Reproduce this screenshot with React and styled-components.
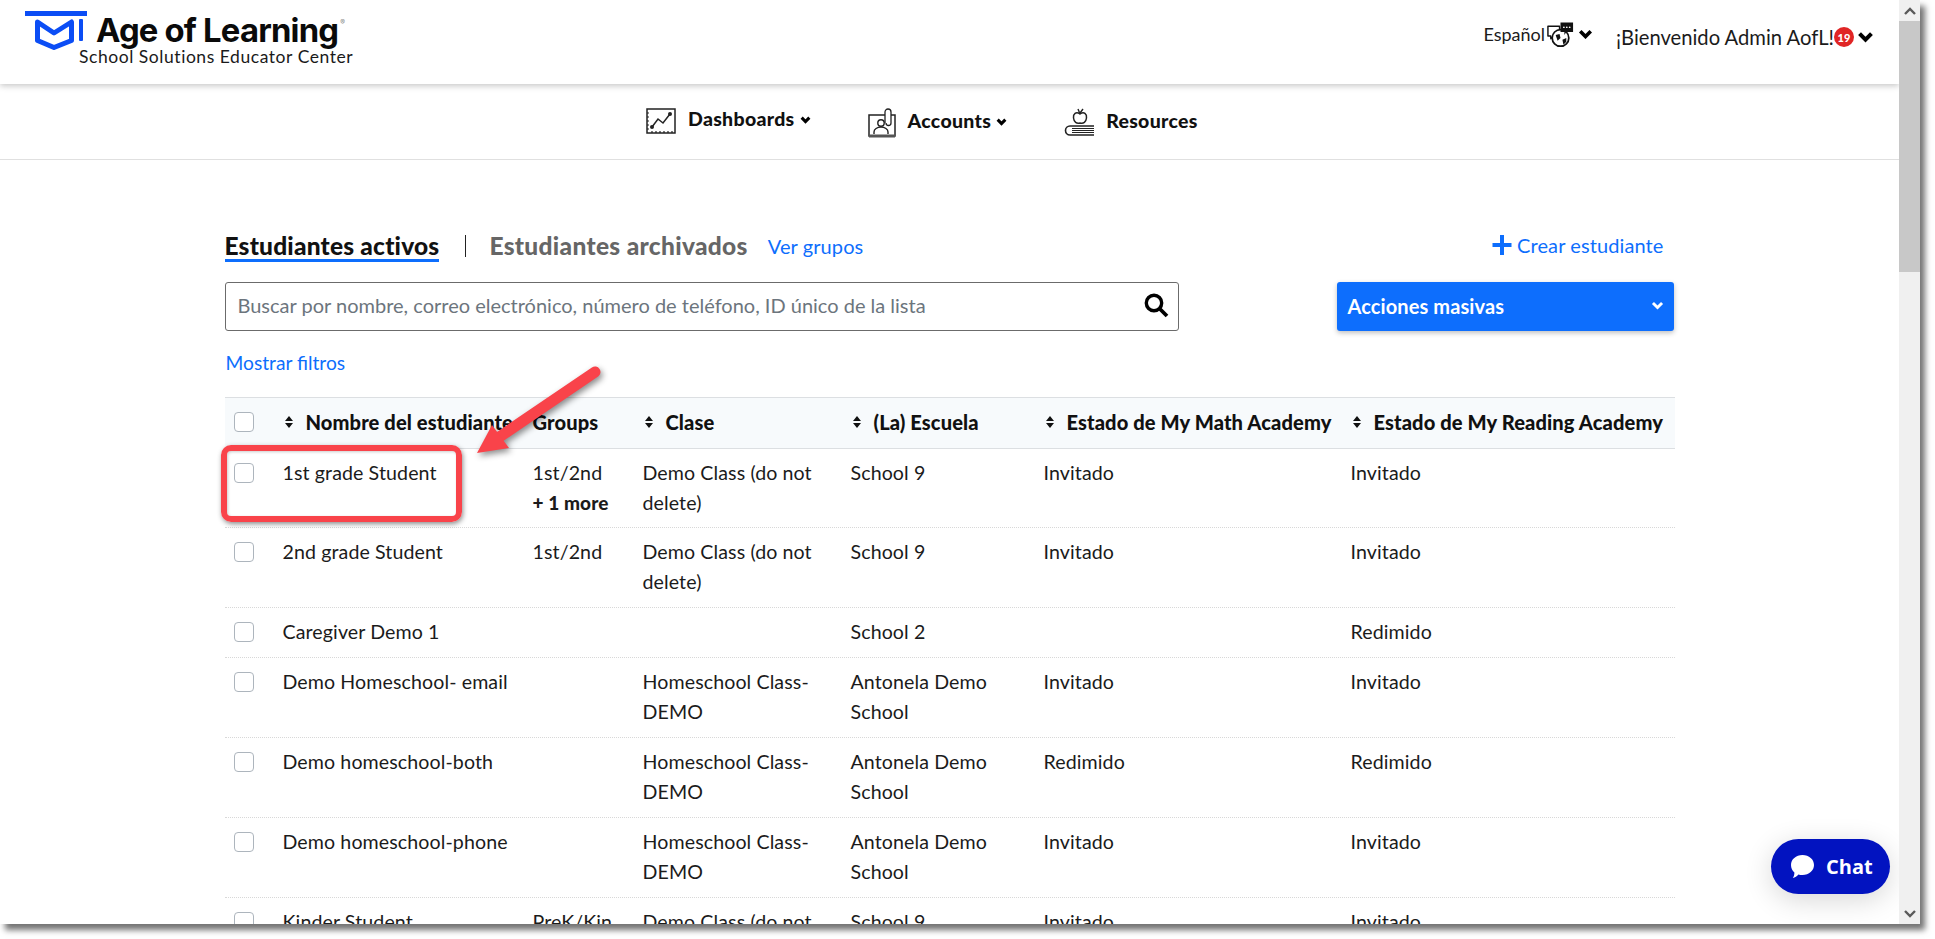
import styled, { createGlobalStyle } from 'styled-components';

const GlobalStyle = createGlobalStyle`
  html, body {
    margin: 0;
    padding: 0;
    background: #fff;
    overflow: hidden;
  }
  * {
    box-sizing: border-box;
  }
`;

const FONT = `Lato, "Open Sans", sans-serif`;
const BLUE = '#0d6efd';
const COLUMNS = '58px 250px 110px 208px 193px 307px 321px';

const Screen = styled.div`
  position: relative;
  width: 1920px;
  height: 924px;
  display: flex;
  overflow: hidden;
  font-family: ${FONT};
  color: #1b1b1b;
  box-shadow: 5px 6px 6px rgba(0, 0, 0, 0.55);
`;

const Frame = styled.div`
  width: 1935px;
  height: 939px;
`;

const Page = styled.div`
  position: relative;
  width: 1899px;
  height: 924px;
  background: #fff;
  overflow: hidden;
`;

const ScrollBar = styled.div`
  width: 21px;
  height: 924px;
  background: #f0f0f0;
  display: flex;
  flex-direction: column;
`;

const ScrollButton = styled.div`
  height: 21px;
  display: flex;
  align-items: center;
  justify-content: center;
`;

const ScrollThumb = styled.div`
  height: 251px;
  background: #c8c8c8;
`;

const ScrollTrack = styled.div`
  flex-grow: 1;
`;

const Header = styled.header`
  height: 84px;
  padding: 11px 25px 0 25px;
  display: flex;
  justify-content: space-between;
  align-items: flex-start;
  box-shadow: 0 2px 6px rgba(0, 0, 0, 0.22);
  background: #fff;
  position: relative;
`;

const Brand = styled.div`
  display: flex;
  flex-direction: column;
`;

const BrandTop = styled.div`
  display: flex;
  align-items: flex-start;
  height: 37px;
`;

const BrandName = styled.div`
  margin: 2px 0 0 9px;
  font-family: Inter, sans-serif;
  font-weight: 700;
  font-size: 32.8px;
  letter-spacing: -0.8px;
  line-height: 34px;
  color: #0a0a0a;
  position: relative;
`;

const Registered = styled.sup`
  font-size: 7px;
  color: #888;
  font-weight: 400;
  letter-spacing: 0;
  vertical-align: 17px;
  line-height: 0;
  margin-left: 2px;
`;

const BrandSub = styled.div`
  margin-left: 54px;
  font-family: Lato, sans-serif;
  font-size: 17.5px;
  line-height: 18px;
  letter-spacing: 0.55px;
  color: #1a1a1a;
`;

const UserArea = styled.div`
  display: flex;
  align-items: flex-start;
  padding-top: 10px;
`;

const Language = styled.div`
  display: flex;
  align-items: center;
  font-size: 18px;
  height: 26px;
  margin-right: 23px;
`;

const LanguageIcon = styled.svg`
  width: 29px;
  height: 27px;
  margin: 0 3px 0 1px;
`;

const Welcome = styled.div`
  display: flex;
  align-items: center;
  font-size: 20.2px;
  height: 32px;
`;

const Badge = styled.span`
  width: 20px;
  height: 20px;
  border-radius: 50%;
  background: #e02525;
  color: #fff;
  font-size: 11px;
  font-weight: 900;
  display: flex;
  align-items: center;
  justify-content: center;
  margin: 0 3px 0 0;
`;

const Nav = styled.nav`
  height: 76px;
  padding: 24px 0 0 646px;
  display: flex;
  align-items: flex-start;
  gap: 57px;
  border-bottom: 1px solid #e0e0e0;
`;

const NavItem = styled.div`
  display: flex;
  align-items: flex-start;
  font-size: 19.5px;
  letter-spacing: 0.3px;
  font-weight: 900;
  color: #111;
  height: 32px;
`;

const NavLabel = styled.span`
  line-height: 22px;
  margin: ${(props) => (props.$raised ? '0' : '2px')} 5px 0 12px;
`;

const NavCaret = styled.span`
  margin-top: ${(props) => (props.$raised ? '8px' : '10px')};
  display: flex;
`;

const Main = styled.main`
  width: 1450px;
  margin: 0 auto;
  padding-top: 64px;
`;

const TabsRow = styled.div`
  display: flex;
  align-items: flex-start;
  height: 58px;
`;

const Tab = styled.div`
  font-size: 24.5px;
  letter-spacing: ${(props) => (props.$active ? '0.2px' : '0.32px')};
  font-weight: 900;
  line-height: 30px;
  height: 38px;
  padding: 7px 0 0;
  white-space: nowrap;
  color: ${(props) => (props.$active ? '#111' : '#666')};
  border-bottom: ${(props) => (props.$active ? `3px solid ${BLUE}` : 'none')};
`;

const TabDivider = styled.div`
  width: 1px;
  height: 22px;
  background: #222;
  margin: 11px 23px 0 26px;
`;

const TextLink = styled.a`
  color: ${BLUE};
  font-size: 20px;
  letter-spacing: 0.1px;
  line-height: 30px;
`;

const GroupsLink = styled(TextLink)`
  margin: 7px 0 0 20px;
`;

const CreateLink = styled(TextLink)`
  margin-left: auto;
  margin-right: 11px;
  margin-top: 6px;
  display: flex;
  align-items: center;
  gap: 5px;
`;

const SearchRow = styled.div`
  display: flex;
  justify-content: space-between;
  align-items: flex-start;
  height: 48px;
`;

const SearchBox = styled.div`
  width: 954px;
  height: 49px;
  border: 1px solid #6b6b6b;
  border-radius: 3px;
  padding: 0 9px 3px 12px;
  display: flex;
  align-items: center;
  justify-content: space-between;
  font-size: 20px;
  color: #6c757d;
`;

const BulkButton = styled.div`
  width: 337px;
  height: 49px;
  margin-right: 1px;
  background: ${BLUE};
  border-radius: 3px;
  padding: 0 10px 2px 11px;
  display: flex;
  align-items: center;
  justify-content: space-between;
  color: #fff;
  font-size: 20px;
  letter-spacing: 0.1px;
  font-weight: 700;
  box-shadow: 0 2px 5px rgba(0, 0, 0, 0.25);
`;

const FiltersRow = styled.div`
  height: 67px;
  padding-top: 18px;
`;

const FiltersLink = styled(TextLink)`
  font-size: 19.2px;
  letter-spacing: 0;
  margin-left: 1px;
`;

const Table = styled.div`
  font-size: 19.6px;
  letter-spacing: 0.1px;
`;

const HeadRow = styled.div`
  display: grid;
  grid-template-columns: ${COLUMNS};
  height: 52px;
  padding-bottom: 2px;
  align-items: center;
  background: #f7fafc;
  border-top: 1px solid #dcdfe2;
  border-bottom: 1px solid #dcdfe2;
  font-size: 20.1px;
  font-weight: 900;
  color: #111;
`;

const HeadCell = styled.div`
  display: flex;
  align-items: center;
  gap: 13px;
  white-space: nowrap;
  padding-left: ${(props) => (props.$sortable ? '2px' : '0')};
`;

const Row = styled.div`
  display: grid;
  grid-template-columns: ${COLUMNS};
  padding: 9px 0 ${(props) => (props.$first ? '9px' : '10px')};
  border-bottom: 1px dotted #d8d8d8;
`;

const CheckCell = styled.div`
  padding: ${(props) => (props.$head ? '0' : '5px')} 0 0 9px;
`;

const Check = styled.div`
  width: 20px;
  height: 20px;
  border: 1px solid #adb5bd;
  border-radius: 4px;
  background: #fff;
`;

const Cell = styled.div`
  line-height: 30px;
  padding-right: 14px;
  min-height: 30px;
`;

const More = styled.div`
  font-size: 19px;
  font-weight: 900;
  white-space: nowrap;
`;

const MarkBox = styled.div`
  position: absolute;
  left: 221px;
  top: 445px;
  width: 241px;
  height: 77px;
  border: 6px solid #f9434a;
  border-radius: 10px;
  box-shadow: 1px 2px 5px rgba(0, 0, 0, 0.45), inset 1px 1px 3px rgba(0, 0, 0, 0.2);
`;

const MarkArrow = styled.svg`
  position: absolute;
  left: 465px;
  top: 360px;
  width: 150px;
  height: 105px;
  overflow: visible;
  filter: drop-shadow(2px 3px 3px rgba(0, 0, 0, 0.45));
`;

const ChatButton = styled.div`
  position: absolute;
  left: 1771px;
  top: 839px;
  width: 119px;
  height: 55px;
  border-radius: 28px;
  background: #0213c0;
  color: #fff;
  font-family: "Open Sans", sans-serif;
  font-size: 20px;
  font-weight: 700;
  display: flex;
  align-items: center;
  gap: 12px;
  padding-left: 20px;
  box-shadow: 0 6px 28px rgba(0, 0, 0, 0.16);
`;

const Chevron = ({ size = 14, color = '#000', weight = 3.4 }) => (
  <svg width={size} height={size * 0.7} viewBox="0 0 14 10">
    <polyline points="2,2.2 7,7.2 12,2.2" fill="none" stroke={color} strokeWidth={weight} />
  </svg>
);

const SortIcon = () => (
  <svg width="8" height="12" viewBox="0 0 8 12">
    <path d="M4 0 L8 5 H0 Z M4 12 L8 7 H0 Z" fill="#111" />
  </svg>
);

const LogoMark = () => (
  <svg width="62" height="41" viewBox="0 0 62 41">
    <rect x="0" y="0" width="62" height="5" fill="#0b4df5" />
    <path d="M12.5 11 L29 22 L46.5 11 V29.5 L29 36.5 L12.5 29.5 Z" fill="none" stroke="#0b4df5" strokeWidth="5" strokeLinejoin="round" />
    <rect x="54" y="8" width="4" height="22" rx="1" fill="#0b4df5" />
  </svg>
);

const GlobeChat = () => (
  <LanguageIcon viewBox="0 0 30 27">
    <path d="M2 5 H14 V15 H8 L5 18 V15 H2 Z" fill="#fff" stroke="#111" strokeWidth="1.5" strokeLinejoin="round" />
    <circle cx="15" cy="17" r="8.6" fill="#fff" stroke="#111" strokeWidth="1.8" />
    <path d="M10 14 L14 13 L15 17 L12 20 Z M17 19 L21 17 L21 21 L18 24 Z" fill="#111" />
    <path d="M15 1 H28 V11 H21 L19 14 V11 H15 Z" fill="#111" />
    <circle cx="18.5" cy="6" r="0.9" fill="#fff" />
    <circle cx="21.5" cy="6" r="0.9" fill="#fff" />
    <circle cx="24.5" cy="6" r="0.9" fill="#fff" />
  </LanguageIcon>
);

const DashboardIcon = () => (
  <svg width="30" height="26" viewBox="0 0 30 26">
    <rect x="1" y="1" width="28" height="24" fill="none" stroke="#222" strokeWidth="1.5" />
    <path d="M1 5 H3 M1 9 H3 M1 13 H3 M1 17 H3 M1 21 H3 M6 25 V23 M10 25 V23 M14 25 V23 M18 25 V23 M22 25 V23 M26 25 V23" stroke="#222" strokeWidth="1.2" />
    <polyline points="6,19 12,11 17,15 24,6" fill="none" stroke="#222" strokeWidth="1.5" />
    <circle cx="6" cy="19" r="2" fill="#222" />
    <circle cx="24" cy="6" r="2" fill="#222" />
  </svg>
);

const AccountIcon = () => (
  <svg width="28" height="30" viewBox="0 0 28 30">
    <rect x="1" y="7" width="26" height="21" fill="none" stroke="#222" strokeWidth="1.5" />
    <rect x="1" y="26.5" width="26" height="3" fill="#555" />
    <path d="M17 15 V4 a3 3 0 0 1 6 0 V15 a2.5 2.5 0 0 1 -5 0" fill="#fff" stroke="#222" strokeWidth="1.3" />
    <circle cx="13" cy="15" r="3.2" fill="none" stroke="#222" strokeWidth="1.4" />
    <path d="M6 26 V24 a7 5 0 0 1 14 0 V26" fill="none" stroke="#222" strokeWidth="1.4" />
  </svg>
);

const ResourceIcon = () => (
  <svg width="30" height="28" viewBox="0 0 30 28">
    <path d="M16 6 C12 3 9 6 9.5 10 C10 14 12.5 16 16 15 C19.5 16 22 14 22.5 10 C23 6 20 3 16 6 Z" fill="none" stroke="#222" strokeWidth="1.5" />
    <path d="M16 6 L14 1 M16 5 L19 1" stroke="#222" strokeWidth="1.4" />
    <path d="M30 18 H6 a4.5 4.5 0 0 0 0 9 H30" fill="none" stroke="#222" strokeWidth="1.6" />
    <path d="M8 20.5 H30 M8 22.5 H30 M8 24.5 H30" stroke="#222" strokeWidth="1.1" />
  </svg>
);

const SearchIcon = () => (
  <svg width="25" height="25" viewBox="0 0 25 25">
    <circle cx="10" cy="10" r="7.7" fill="none" stroke="#000" strokeWidth="3.4" />
    <line x1="15.5" y1="15.5" x2="23" y2="23" stroke="#000" strokeWidth="3.8" />
  </svg>
);

const PlusIcon = () => (
  <svg width="20" height="20" viewBox="0 0 19 20">
    <path d="M7.5 0 H11.5 V8 H19 V12 H11.5 V20 H7.5 V12 H0 V8 H7.5 Z" fill={BLUE} />
  </svg>
);

const ChatBubble = () => (
  <svg width="23" height="24" viewBox="0 0 23 24">
    <path d="M11.5 0 C18 0 23 4.4 23 10 C23 15.6 18 20 11.5 20 C9.8 20 8.6 19.8 7.4 19.4 C6 21 4 22.5 1.8 23 C3 21.4 3.4 19.6 3.4 17.4 C1.3 15.6 0 13 0 10 C0 4.4 5 0 11.5 0 Z" fill="#fff" />
  </svg>
);

const HEADERS = [
  { label: 'Nombre del estudiante', sortable: true },
  { label: 'Groups' },
  { label: 'Clase', sortable: true },
  { label: '(La) Escuela', sortable: true },
  { label: 'Estado de My Math Academy', sortable: true },
  { label: 'Estado de My Reading Academy', sortable: true },
];

const DEMO_CLASS = 'Demo Class (do not delete)';
const HOME_CLASS = 'Homeschool Class-DEMO';
const ANTONELA = 'Antonela Demo School';

const STUDENTS = [
  { name: '1st grade Student', group: '1st/2nd', more: '+ 1 more', klass: DEMO_CLASS, school: 'School 9', math: 'Invitado', reading: 'Invitado' },
  { name: '2nd grade Student', group: '1st/2nd', klass: DEMO_CLASS, school: 'School 9', math: 'Invitado', reading: 'Invitado' },
  { name: 'Caregiver Demo 1', school: 'School 2', reading: 'Redimido' },
  { name: 'Demo Homeschool- email', klass: HOME_CLASS, school: ANTONELA, math: 'Invitado', reading: 'Invitado' },
  { name: 'Demo homeschool-both', klass: HOME_CLASS, school: ANTONELA, math: 'Redimido', reading: 'Redimido' },
  { name: 'Demo homeschool-phone', klass: HOME_CLASS, school: ANTONELA, math: 'Invitado', reading: 'Invitado' },
  { name: 'Kinder Student', group: 'PreK/Kin', klass: DEMO_CLASS, school: 'School 9', math: 'Invitado', reading: 'Invitado' },
];

function App() {
  return (
    <Frame>
      <GlobalStyle />
      <Screen>
        <Page>
          <Header>
            <Brand>
              <BrandTop>
                <LogoMark />
                <BrandName>
                  Age of Learning<Registered>®</Registered>
                </BrandName>
              </BrandTop>
              <BrandSub>School Solutions Educator Center</BrandSub>
            </Brand>
            <UserArea>
              <Language>
                Español
                <GlobeChat />
                <Chevron size={15} />
              </Language>
              <Welcome>
                ¡Bienvenido Admin AofL!
                <Badge>19</Badge>
                <Chevron size={17} />
              </Welcome>
            </UserArea>
          </Header>

          <Nav>
            <NavItem>
              <DashboardIcon />
              <NavLabel $raised>Dashboards</NavLabel>
              <NavCaret $raised>
                <Chevron size={11} weight={4} />
              </NavCaret>
            </NavItem>
            <NavItem>
              <AccountIcon />
              <NavLabel>Accounts</NavLabel>
              <NavCaret>
                <Chevron size={11} weight={4} />
              </NavCaret>
            </NavItem>
            <NavItem>
              <ResourceIcon />
              <NavLabel>Resources</NavLabel>
            </NavItem>
          </Nav>

          <Main>
            <TabsRow>
              <Tab $active>Estudiantes activos</Tab>
              <TabDivider />
              <Tab>Estudiantes archivados</Tab>
              <GroupsLink>Ver grupos</GroupsLink>
              <CreateLink>
                <PlusIcon />
                Crear estudiante
              </CreateLink>
            </TabsRow>

            <SearchRow>
              <SearchBox>
                Buscar por nombre, correo electrónico, número de teléfono, ID único de la lista
                <SearchIcon />
              </SearchBox>
              <BulkButton>
                Acciones masivas
                <Chevron size={13} color="#fff" weight={3.2} />
              </BulkButton>
            </SearchRow>

            <FiltersRow>
              <FiltersLink>Mostrar filtros</FiltersLink>
            </FiltersRow>

            <Table>
              <HeadRow>
                <CheckCell $head>
                  <Check />
                </CheckCell>
                {HEADERS.map((head) => (
                  <HeadCell key={head.label} $sortable={head.sortable}>
                    {head.sortable && <SortIcon />}
                    {head.label}
                  </HeadCell>
                ))}
              </HeadRow>
              {STUDENTS.map((student, index) => (
                <Row key={student.name} $first={index === 0}>
                  <CheckCell>
                    <Check />
                  </CheckCell>
                  <Cell>{student.name}</Cell>
                  <Cell>
                    {student.group}
                    {student.more && <More>{student.more}</More>}
                  </Cell>
                  <Cell>{student.klass}</Cell>
                  <Cell>{student.school}</Cell>
                  <Cell>{student.math}</Cell>
                  <Cell>{student.reading}</Cell>
                </Row>
              ))}
            </Table>
          </Main>

          <MarkBox />
          <MarkArrow viewBox="0 0 150 105">
            <path d="M130 12 L24 84" stroke="#f9434a" strokeWidth="11" strokeLinecap="round" fill="none" />
            <path d="M12 93 L27 65 L44 88 Z" fill="#f9434a" />
          </MarkArrow>

          <ChatButton>
            <ChatBubble />
            Chat
          </ChatButton>
        </Page>
        <ScrollBar>
          <ScrollButton>
            <svg width="12" height="8" viewBox="0 0 12 8">
              <polyline points="1,7 6,2 11,7" fill="none" stroke="#5a5a5a" strokeWidth="2.4" />
            </svg>
          </ScrollButton>
          <ScrollThumb />
          <ScrollTrack />
          <ScrollButton>
            <svg width="12" height="8" viewBox="0 0 12 8">
              <polyline points="1,1 6,6 11,1" fill="none" stroke="#5a5a5a" strokeWidth="2.4" />
            </svg>
          </ScrollButton>
        </ScrollBar>
      </Screen>
    </Frame>
  );
}

export default App;
